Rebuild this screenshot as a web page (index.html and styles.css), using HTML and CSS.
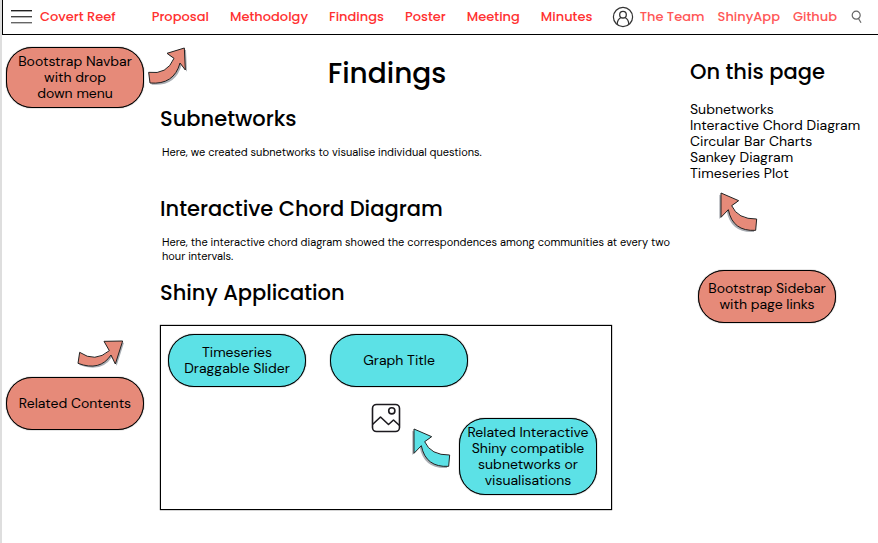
FILE: index.html
```html
<!DOCTYPE html>
<html lang="en">
<head>
<meta charset="utf-8">
<title>Covert Reef - Findings</title>
<link rel="stylesheet" href="styles.css">
</head>
<body>
<svg class="defs" aria-hidden="true">
  <symbol id="arrow-left" viewBox="0 0 150 150">
    <path class="shade" transform="translate(-5 5)" d="M15 12L68 35L47 50Q65 91 122 90L119 124Q50 128 37 62L15 85Z"/>
    <path class="edge" d="M15 12L68 35L47 50Q65 91 122 90L119 124Q50 128 37 62L15 85Z"/>
  </symbol>
  <symbol id="arrow-right" viewBox="0 0 150 150">
    <path class="shade" transform="translate(5 5)" d="M14 97Q69 105 90 55L69 40L121 24L124 90L108 69Q90 135 18 129Z"/>
    <path class="edge" d="M14 97Q69 105 90 55L69 40L121 24L124 90L108 69Q90 135 18 129Z"/>
  </symbol>
  <symbol id="arrow-up" viewBox="0 0 150 150">
    <path class="shade" transform="translate(4 5)" d="M143 18L87 19L103 47Q60 84 14 52L9 85Q75 110 108 60L121 87Z"/>
    <path class="edge" d="M143 18L87 19L103 47Q60 84 14 52L9 85Q75 110 108 60L121 87Z"/>
  </symbol>
</svg>

<header class="navbar">
  <button class="icon-button" aria-label="Menu">
    <svg width="22" height="16" viewBox="0 0 22 16"><path d="M0 1.7H21" stroke="#222" stroke-width="1.4"/><path d="M0 7.7H21" stroke="#444" stroke-width="1.4"/><path d="M0 13.7H21" stroke="#666" stroke-width="1.4"/></svg>
  </button>
  <a class="brand" href="#">Covert Reef</a>
  <nav class="pages" aria-label="Pages">
    <a href="#">Proposal</a>
    <a href="#">Methodolgy</a>
    <a href="#">Findings</a>
    <a href="#">Poster</a>
    <a href="#">Meeting</a>
    <a href="#">Minutes</a>
  </nav>
  <nav class="links" aria-label="Project">
    <a class="team" href="#">
      <svg width="22" height="22" viewBox="0 0 22 22" fill="none" stroke="#333"><circle cx="11" cy="11" r="9.6" stroke-width="1.2"/><circle cx="11" cy="8.7" r="3.3" stroke-width="1.3"/><path d="M5.2 18C5.4 14.5 7 12.5 9 11.5M16.8 18C16.6 14.5 15 12.5 13 11.5" stroke-width="1.3"/></svg>
      The Team</a>
    <a href="#">ShinyApp</a>
    <a href="#">Github</a>
  </nav>
  <button class="icon-button" aria-label="Search">
    <svg width="12" height="14" viewBox="0 0 12 14" fill="none" stroke="#666" stroke-width="1.2"><circle cx="5.2" cy="5.2" r="4"/><path d="M7.5 8.5L10 12.8"/></svg>
  </button>
</header>

<div class="page">
  <aside class="notes">
    <div class="note-row">
      <div class="pill coral">Bootstrap Navbar<br>with drop<br>down menu</div>
      <svg class="arrow coral-arrow"><use href="#arrow-right"/></svg>
    </div>
    <div class="note-stack">
      <svg class="arrow coral-arrow"><use href="#arrow-up"/></svg>
      <div class="pill coral">Related Contents</div>
    </div>
  </aside>

  <main>
    <h1>Findings</h1>
    <section>
      <h2>Subnetworks</h2>
      <p>Here, we created subnetworks to visualise individual questions.</p>
    </section>
    <section>
      <h2>Interactive Chord Diagram</h2>
      <p>Here, the interactive chord diagram showed the correspondences among communities at every two hour intervals.</p>
    </section>
    <section>
      <h2>Shiny Application</h2>
      <div class="app">
        <div class="app-top">
          <div class="pill cyan">Timeseries<br>Draggable Slider</div>
          <div class="pill cyan">Graph Title</div>
        </div>
        <div class="app-body">
          <svg class="picture" width="30" height="30" viewBox="0 0 30 30" fill="none" stroke="#1c1a1f" stroke-width="1.6"><rect x="1.5" y="1.5" width="27" height="27" rx="4"/><circle cx="20.8" cy="7.8" r="3.1"/><path d="M1.5 21.5L9.5 14L17.5 21.5L22.5 17L28.5 22.5" stroke-linejoin="round"/></svg>
          <svg class="arrow cyan-arrow"><use href="#arrow-left"/></svg>
          <div class="pill cyan">Related Interactive<br>Shiny compatible<br>subnetworks or<br>visualisations</div>
        </div>
      </div>
    </section>
  </main>

  <aside class="sidebar">
    <h2>On this page</h2>
    <ul>
      <li><a href="#">Subnetworks</a></li>
      <li><a href="#">Interactive Chord Diagram</a></li>
      <li><a href="#">Circular Bar Charts</a></li>
      <li><a href="#">Sankey Diagram</a></li>
      <li><a href="#">Timeseries Plot</a></li>
    </ul>
    <svg class="arrow coral-arrow"><use href="#arrow-left"/></svg>
    <div class="pill coral">Bootstrap Sidebar<br>with page links</div>
  </aside>
</div>
</body>
</html>
```
FILE: styles.css
```css
* { box-sizing: border-box; }
body {
  margin: 0;
  min-height: 100vh;
  border-left: 2px solid #dedede;
  background: #fff;
  color: #000;
  font-family: "DM Sans", Inter, sans-serif;
  font-size: 14px;
  line-height: 16px;
}
a { color: inherit; text-decoration: none; }
h1, h2, p, ul { margin: 0; padding: 0; font-weight: 400; }
h1, h2, .navbar { font-family: Poppins, Inter, sans-serif; font-weight: 500; }
ul { list-style: none; }
svg { display: block; flex: none; }
.defs { position: absolute; width: 0; height: 0; }

.navbar {
  display: flex;
  align-items: center;
  height: 35px;
  padding: 0 15px 0 8px;
  border-left: 1px solid #000;
  border-bottom: 1px solid #000;
  color: #ff3131;
  font-size: 13px;
  white-space: nowrap;
}
.icon-button { padding: 0; border: 0; background: none; }
.brand { margin-left: 7px; }
.pages { display: flex; gap: 21px; margin-left: 36px; }
.links { display: flex; align-items: center; gap: 13px; margin: 0 14px 0 auto; color: #ff5757; }
.team { display: flex; align-items: center; gap: 6px; }

.page {
  display: grid;
  grid-template-columns: 158px 1fr 188px;
}

.pill {
  display: flex;
  align-items: center;
  justify-content: center;
  flex: none;
  width: 138px;
  min-height: 53px;
  padding: 5px 0 6px;
  border: 1px solid #000;
  border-radius: 26px;
  box-shadow: 0 0 1px #000;
  text-align: center;
  white-space: nowrap;
}
.coral { background: #e68a79; }
.cyan { background: #5ce1e6; }

.arrow { width: 50px; height: 50px; }
.shade { fill: #aaaeb4; }
.edge { stroke: #222; stroke-width: 3; }
.coral-arrow { fill: #e68a79; }
.cyan-arrow { fill: #5ce1e6; }

.notes { padding: 12px 0 0 4px; }
.note-row { display: flex; align-items: flex-start; }
.note-row .arrow { margin-top: -7px; }
.note-stack { margin-top: 227px; }
.note-stack .arrow { margin: 0 0 -8px 69px; }

main { padding-right: 12px; }
h1 { margin: 21px 64px 0 0; font-size: 28px; line-height: 36px; text-align: center; }
h2 { font-size: 21px; line-height: 28px; }
section { min-height: 90px; }
section:nth-of-type(1) { margin-top: 13px; }
section:nth-of-type(2) { min-height: 84px; }
p { margin-top: 12px; padding-left: 2px; font-size: 11px; line-height: 14px; }

.app {
  margin: 18px 66px 0 0;
  padding: 8px 14px 14px 7px;
  border: 1px solid #000;
  box-shadow: 0 0 1px #000;
}
.app-top { display: flex; gap: 24px; }
.app-body { display: flex; align-items: flex-end; justify-content: flex-end; margin-top: 16px; }
.picture { align-self: flex-start; margin-right: 8px; }
.app-body .arrow { margin-bottom: 20px; }
.app-body .pill { min-height: 77px; margin-top: 15px; }

.sidebar { padding-top: 23px; }
.sidebar ul { margin-top: 15px; }
.sidebar .arrow { margin: 8px 0 0 26px; }
.sidebar .pill { margin: 31px 0 0 8px; }
```
